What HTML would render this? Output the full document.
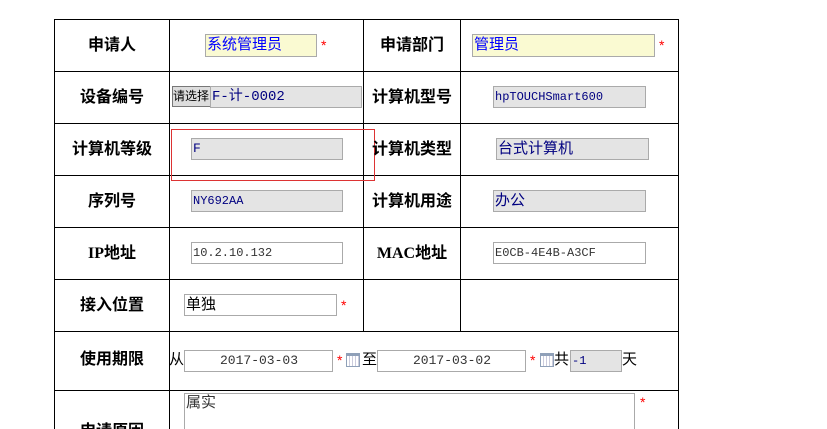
<!DOCTYPE html><html><head><meta charset="utf-8"><style>
html,body{margin:0;width:827px;height:429px;overflow:hidden}
body{background:#fff;position:relative;font-family:"Liberation Sans","Noto Sans CJK SC",sans-serif}
.h{position:absolute;height:1px;background:#000}
.v{position:absolute;width:1px;background:#000}
.l{position:absolute;font-weight:bold;font-size:16px;color:#000;text-align:center;line-height:20px;font-family:"Liberation Serif","Noto Sans CJK SC",sans-serif}
.i{position:absolute;box-sizing:border-box;border:1px solid #aaa;background:#e4e4e4;font-family:"Liberation Mono","Noto Sans CJK SC",monospace;font-size:13px;color:#000080;line-height:20px;padding-left:1px;white-space:nowrap;overflow:hidden}
.y{background:#fafad2;color:#00f;font-family:"Liberation Sans","Noto Sans CJK SC",sans-serif;font-size:15px}
.w{background:#fff}
.s{position:absolute;color:#f00;font-size:14px}
.t{position:absolute;font-size:15px;line-height:20px}
.cal{position:absolute;width:14px;height:14px;border:1px solid #8fa0b8;box-sizing:border-box;border-top:3px solid #8fa0b8;background:repeating-linear-gradient(90deg,#fff 0 2px,#ccd 2px 3px)}
</style></head><body>
<div class="h" style="left:54px;width:625px;top:19px"></div>
<div class="h" style="left:54px;width:625px;top:71px"></div>
<div class="h" style="left:54px;width:625px;top:123px"></div>
<div class="h" style="left:54px;width:625px;top:175px"></div>
<div class="h" style="left:54px;width:625px;top:227px"></div>
<div class="h" style="left:54px;width:625px;top:279px"></div>
<div class="h" style="left:54px;width:625px;top:331px"></div>
<div class="h" style="left:54px;width:625px;top:390px"></div>
<div class="v" style="left:54px;top:19px;height:410px"></div>
<div class="v" style="left:169px;top:19px;height:410px"></div>
<div class="v" style="left:363px;top:19px;height:312px"></div>
<div class="v" style="left:460px;top:19px;height:312px"></div>
<div class="v" style="left:678px;top:19px;height:410px"></div>
<div style="position:absolute;left:171px;top:129px;width:204px;height:52px;border:1px solid #d33;box-sizing:border-box"></div>

<div class="l" style="left:55px;width:114px;top:36px">申请人</div>
<div class="l" style="left:55px;width:114px;top:88px">设备编号</div>
<div class="l" style="left:55px;width:114px;top:140px">计算机等级</div>
<div class="l" style="left:55px;width:114px;top:192px">序列号</div>
<div class="l" style="left:55px;width:114px;top:244px">IP地址</div>
<div class="l" style="left:55px;width:114px;top:296px">接入位置</div>
<div class="l" style="left:55px;width:114px;top:350px">使用期限</div>
<div class="l" style="left:55px;width:114px;top:422px">申请原因</div>
<div class="l" style="left:364px;width:96px;top:36px">申请部门</div>
<div class="l" style="left:364px;width:96px;top:88px">计算机型号</div>
<div class="l" style="left:364px;width:96px;top:140px">计算机类型</div>
<div class="l" style="left:364px;width:96px;top:192px">计算机用途</div>
<div class="l" style="left:364px;width:96px;top:244px">MAC地址</div>

<div class="i y" style="left:205px;top:34px;width:112px;height:23px">系统管理员</div><span class="s" style="left:321px;top:37px">*</span>
<div class="i y" style="left:472px;top:34px;width:183px;height:23px">管理员</div><span class="s" style="left:659px;top:37px">*</span>
<div class="i" style="left:172px;top:86px;width:39px;height:21px;background:#ddd;border-color:#777;color:#000;font-family:'Liberation Sans','Noto Sans CJK SC',sans-serif;font-size:12px;padding:0;line-height:19px">请选择</div>
<div class="i" style="left:210px;top:86px;width:152px;height:22px;font-size:14px">F-计-0002</div>
<div class="i" style="left:493px;top:86px;width:153px;height:22px;font-size:12px">hpTOUCHSmart600</div>
<div class="i" style="left:191px;top:138px;width:152px;height:22px">F</div>
<div class="i" style="left:496px;top:138px;width:153px;height:22px;font-family:'Liberation Sans','Noto Sans CJK SC',sans-serif;font-size:15px">台式计算机</div>
<div class="i" style="left:191px;top:190px;width:152px;height:22px;font-size:12px">NY692AA</div>
<div class="i" style="left:493px;top:190px;width:153px;height:22px;font-family:'Liberation Sans','Noto Sans CJK SC',sans-serif;font-size:15px">办公</div>
<div class="i w" style="left:191px;top:242px;width:152px;height:22px;color:#333;font-size:12px">10.2.10.132</div>
<div class="i w" style="left:493px;top:242px;width:153px;height:22px;color:#333;font-size:12px">E0CB-4E4B-A3CF</div>
<div class="i w" style="left:184px;top:294px;width:153px;height:22px;color:#000;font-family:'Liberation Sans','Noto Sans CJK SC',sans-serif;font-size:15px">单独</div><span class="s" style="left:341px;top:297px">*</span>

<span class="t" style="left:169px;top:350px">从</span>
<div class="i w" style="left:184px;top:350px;width:149px;height:22px;text-align:center;color:#333;font-size:13px">2017-03-03</div><span class="s" style="left:337px;top:352px">*</span>
<div class="cal" style="left:346px;top:353px"></div>
<span class="t" style="left:362px;top:350px">至</span>
<div class="i w" style="left:377px;top:350px;width:149px;height:22px;text-align:center;color:#333;font-size:13px">2017-03-02</div><span class="s" style="left:530px;top:352px">*</span>
<div class="cal" style="left:540px;top:353px"></div>
<span class="t" style="left:554px;top:350px">共</span>
<div class="i" style="left:570px;top:350px;width:52px;height:22px;font-size:12px">-1</div>
<span class="t" style="left:622px;top:350px">天</span>

<div class="i w" style="left:184px;top:393px;width:451px;height:50px;color:#333;font-family:'Liberation Sans','Noto Sans CJK SC',sans-serif;font-size:15px;line-height:17px">属实</div><span class="s" style="left:640px;top:394px">*</span>
</body></html>
